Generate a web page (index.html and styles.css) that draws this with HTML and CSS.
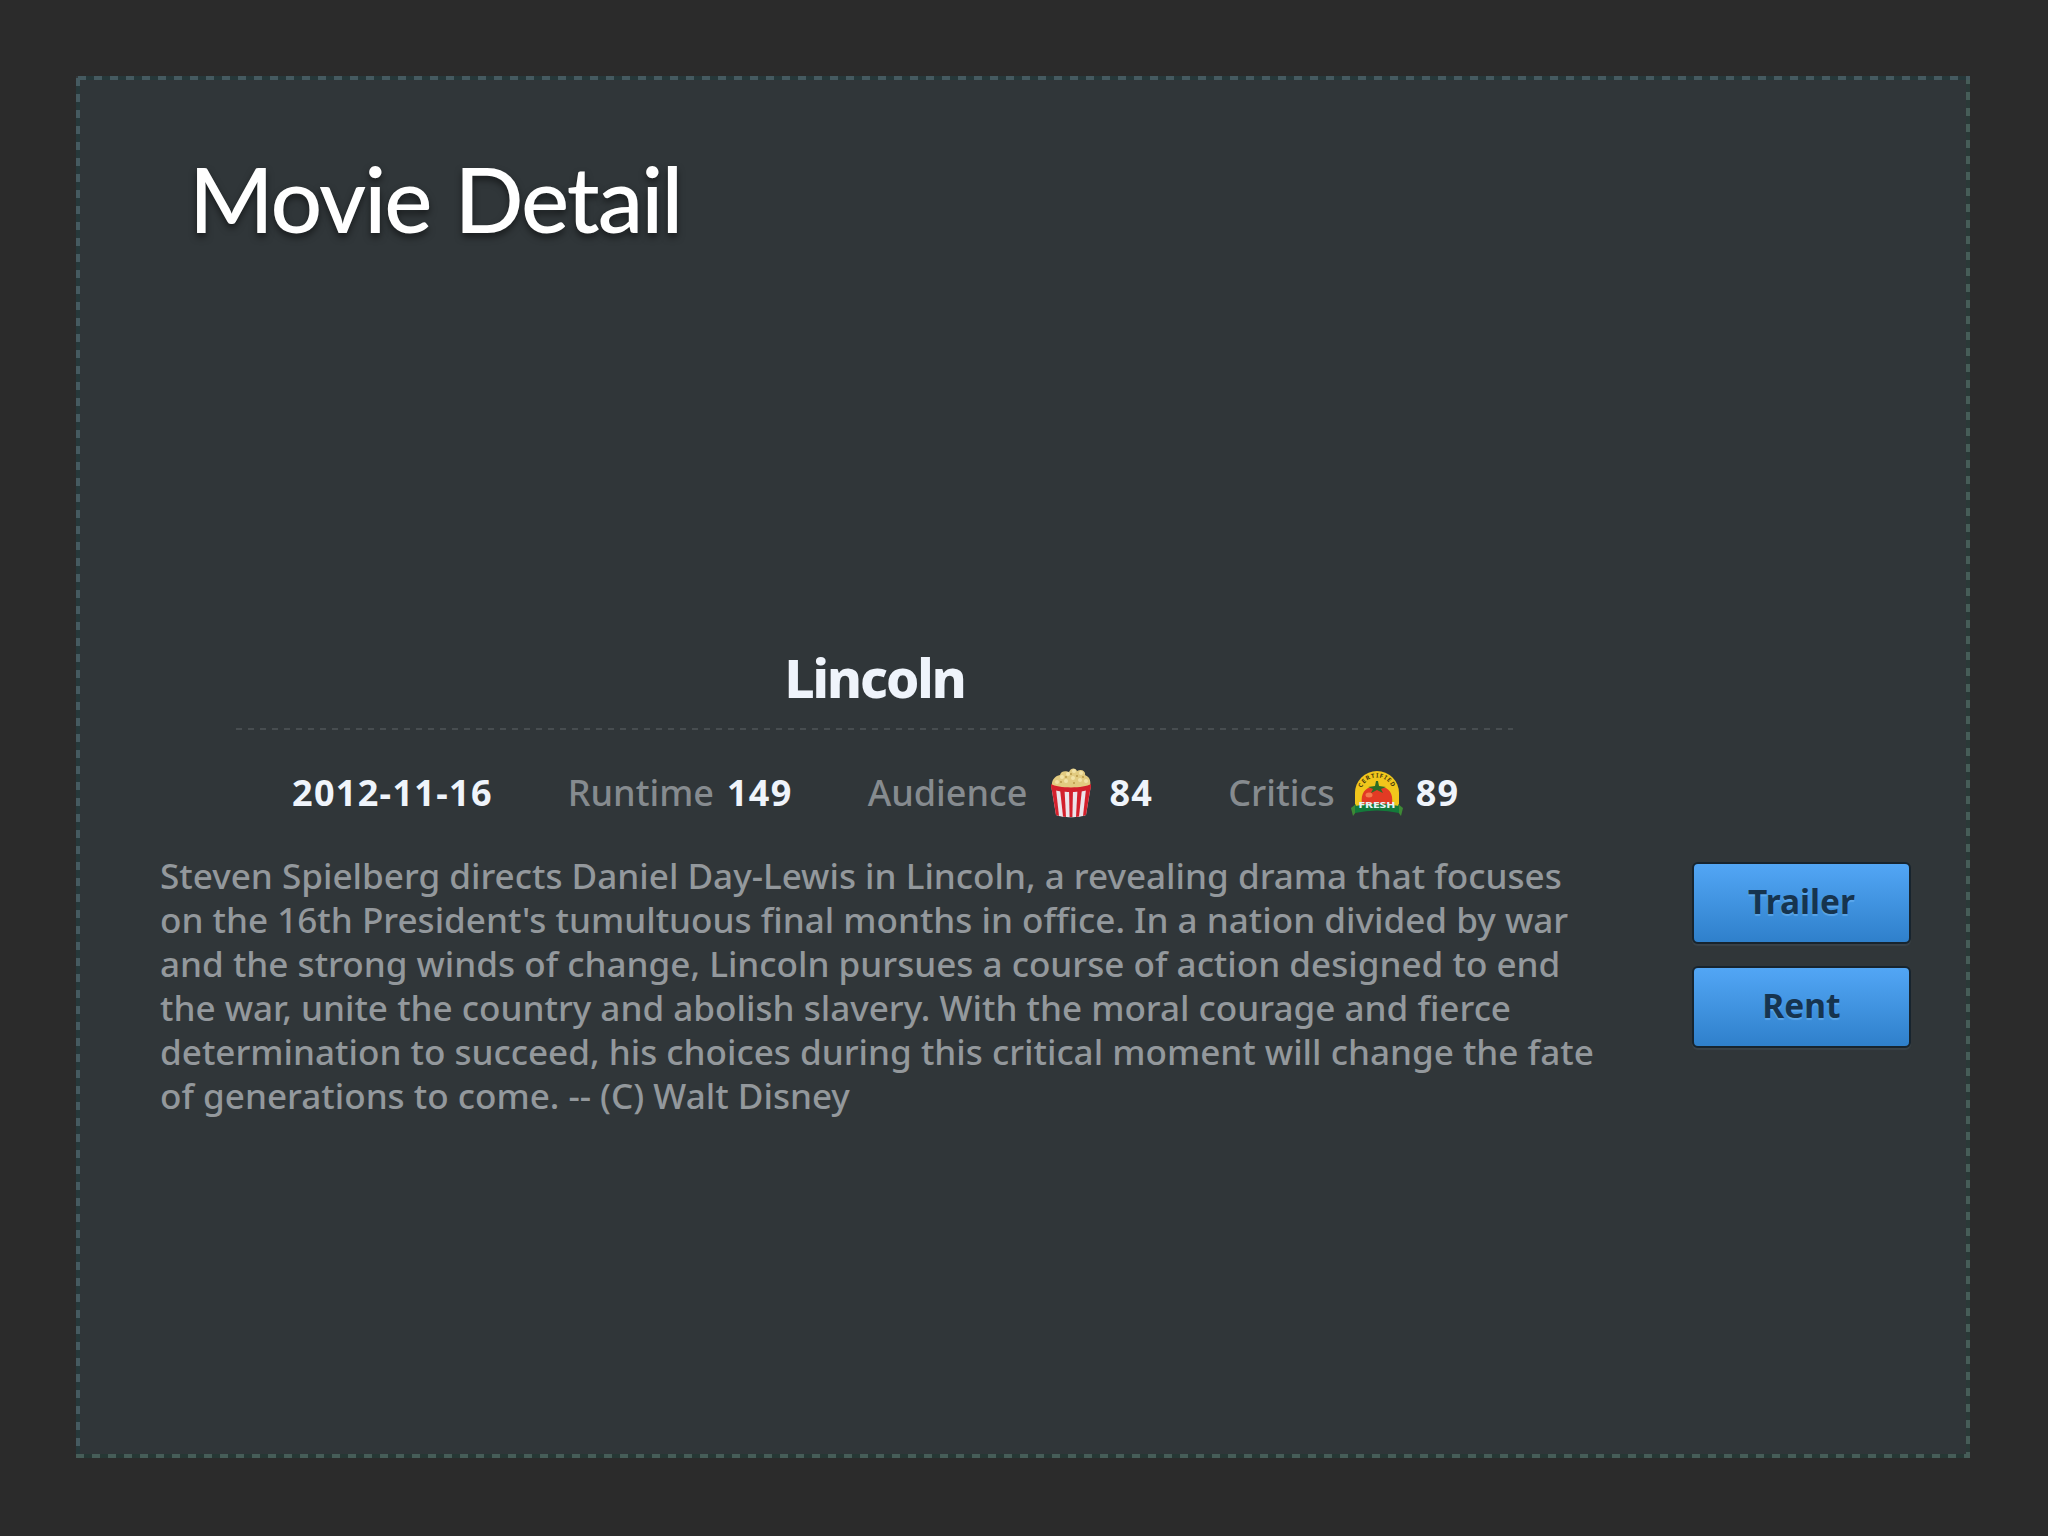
FILE: index.html
```
<!DOCTYPE html>
<html lang="en">
<head>
    <meta charset="UTF-8">
    <meta name="viewport" content="width=device-width, initial-scale=1.0">
    <title>Movie Detail</title>
    <link rel="stylesheet" href="styles.css">
</head>
<body>

    <main class="panel">
        <h1>Movie Detail</h1>

        <section class="movie">
            <!-- Title, ratings and synopsis -->
            <div class="info">
                <h2>Lincoln</h2>

                <div class="meta">
                    <div class="meta-item"><strong>2012-11-16</strong></div>
                    <div class="meta-item"><span>Runtime</span> <strong>149</strong></div>
                    <div class="meta-item">
                        <span>Audience</span>
                        <svg class="popcorn" viewBox="0 0 42 50">
                            <path d="M2 19C1 12 5 8 10 7C11 2 17 3 19 4C21-1 26 0 27 3C32 0 36 4 35 7C40 9 41 13 40 19C30 23 12 23 2 19Z" fill="#e2cb80"/>
                            <g fill="#f1e2a6">
                                <circle cx="7" cy="14" r="2"/>
                                <circle cx="12" cy="9" r="2"/>
                                <circle cx="18" cy="6" r="2"/>
                                <circle cx="24" cy="3" r="2"/>
                                <circle cx="31" cy="5" r="2"/>
                                <circle cx="16" cy="13" r="2"/>
                                <circle cx="23" cy="10" r="2"/>
                                <circle cx="30" cy="12" r="2"/>
                                <circle cx="36" cy="13" r="2"/>
                            </g>
                            <g fill="#b9994a">
                                <circle cx="11" cy="14" r="1"/>
                                <circle cx="16" cy="9" r="1"/>
                                <circle cx="21" cy="6" r="1"/>
                                <circle cx="27" cy="8" r="1"/>
                                <circle cx="33" cy="9" r="1"/>
                                <circle cx="24" cy="15" r="1"/>
                            </g>
                            <path d="M1 17C8 22 34 22 41 17L36 47C30 50 12 50 6 47Z" fill="#ece4ea"/>
                            <g fill="#d3202c">
                                <path d="M1 17L6 47L9 48L6 21Z"/>
                                <path d="M10 21L13 48.6L16 49L14.5 21Z"/>
                                <path d="M19 21L19.6 49H22.4L23 21Z"/>
                                <path d="M27.5 21L26 49L29 48.6L32 21Z"/>
                                <path d="M36 21L33 48L36 47L41 17Z"/>
                            </g>
                            <path d="M1 16C8 20.500 34 20.500 41 16L40.500 21C34 25 8 25 1.500 21Z" fill="#d3202c"/>
                        </svg>
                        <strong>84</strong>
                    </div>
                    <div class="meta-item">
                        <span>Critics</span>
                        <svg class="fresh" viewBox="0 0 52 46">
                            <path d="M4 36V23A22 22 0 0 1 48 23V36Z" fill="#f1c61c"/>
                            <path id="arc" d="M9.500 30V24A16.500 16.500 0 0 1 42.500 24V30" fill="none"/>
                            <text class="arc-text"><textPath href="#arc" startOffset="50%">CERTIFIED</textPath></text>
                            <path d="M11 34C9 21 17 15 26 18C35 15 43 21 41 34Z" fill="#e23a24"/>
                            <ellipse cx="18" cy="25" rx="3.500" ry="2.500" fill="#f47a4c"/>
                            <path d="M25 11L27 11L28 16L35 17L30 19L32 23L26 20L20 23L22 19L17 17L24 16Z" fill="#2d6b25"/>
                            <path d="M0 38L5 34V42L2 46Z" fill="#3d8a35"/>
                            <path d="M52 38L47 34V42L50 46Z" fill="#3d8a35"/>
                            <path d="M4 36Q26 31 48 36V43Q26 38 4 43Z" fill="#137a3a"/>
                            <text class="fresh-text" x="26" y="38" textLength="37" lengthAdjust="spacingAndGlyphs">FRESH</text>
                        </svg>
                        <strong>89</strong>
                    </div>
                </div>

                <p class="synopsis">
                    Steven Spielberg directs Daniel Day-Lewis in Lincoln, a revealing drama that focuses<br>
                    on the 16th President's tumultuous final months in office. In a nation divided by war<br>
                    and the strong winds of change, Lincoln pursues a course of action designed to end<br>
                    the war, unite the country and abolish slavery. With the moral courage and fierce<br>
                    determination to succeed, his choices during this critical moment will change the fate<br>
                    of generations to come. -- (C) Walt Disney
                </p>
            </div>

            <!-- Actions -->
            <div class="actions">
                <button>Trailer</button>
                <button>Rent</button>
            </div>
        </section>
    </main>

</body>
</html>
```

FILE: styles.css
```
* {
    box-sizing: border-box;
    margin: 0;
    padding: 0;
}

body {
    height: 1536px;
    padding: 76px 78px 78px 76px;
    background-color: #2b2b2b;
    font-family: "Noto Sans", "Open Sans", sans-serif;
    overflow: hidden;
}

/* Panel, the dashed edge is drawn with 8px dashes and 8px gaps */
.panel {
    height: 1382px;
    padding: 72px 59px 0 82px;
    background:
        repeating-linear-gradient(90deg, #455a60 0 8px, #26383a 8px 16px) 2px 0 / 100% 4px no-repeat,
        repeating-linear-gradient(90deg, #465d58 0 8px, #263835 8px 16px) 0 100% / 100% 4px no-repeat,
        repeating-linear-gradient(180deg, #455a60 0 8px, #26383a 8px 16px) 0 2px / 4px 100% no-repeat,
        repeating-linear-gradient(180deg, #465d58 0 8px, #2a3937 8px 16px) 100% 0 / 4px 100% no-repeat,
        #303639;
}

h1 {
    padding-left: 31px;
    font-family: Lato, sans-serif;
    font-size: 91px;
    font-weight: 500;
    line-height: 100px;
    letter-spacing: -2px;
    word-spacing: 3px;
    color: #fff;
    text-shadow: 0 4px 7px rgba(0, 0, 0, 0.5);
}

.movie {
    display: flex;
    justify-content: space-between;
    margin-top: 400px;
}

.info {
    width: 1433px;
}

/* Movie name */
h2 {
    height: 82px;
    margin: 0 78px;
    background: repeating-linear-gradient(90deg, #474d50 0 6px, transparent 6px 12px) 0 100% / 100% 2px no-repeat;
    font-size: 53px;
    font-weight: 800;
    line-height: 60px;
    letter-spacing: -2px;
    text-align: center;
    color: #eff4fb;
}

/* Date, runtime and scores */
.meta {
    display: flex;
    gap: 75px;
    height: 50px;
    margin-top: 38px;
    padding-left: 134px;
    align-items: center;
    font-size: 36px;
    line-height: 44px;
}

.meta-item {
    display: flex;
    align-items: center;
    gap: 13px;
}

.meta span {
    font-weight: 500;
    color: #868b8f;
}

.meta strong {
    font-weight: 700;
    letter-spacing: 1.3px;
    color: #eff4fb;
}

.popcorn {
    width: 42px;
    height: 50px;
    margin: 0 4px 0 10px;
}

.fresh {
    width: 52px;
    height: 46px;
    margin-left: 3px;
    overflow: visible;
}

.arc-text {
    font-size: 6px;
    font-weight: 700;
    letter-spacing: 1px;
    text-anchor: middle;
    fill: #4a3b0c;
}

.fresh-text {
    font-size: 9.5px;
    font-weight: 800;
    text-anchor: middle;
    fill: #e4f1f5;
}

.synopsis {
    margin-top: 35px;
    padding-left: 2px;
    font-size: 35.1px;
    font-weight: 500;
    line-height: 44px;
    white-space: nowrap;
    color: #93989c;
}

/* Buttons */
.actions {
    display: flex;
    flex-direction: column;
    gap: 22px;
    margin-top: 214px;
}

button {
    width: 219px;
    height: 82px;
    padding-bottom: 4px;
    border: 2px solid #17242e;
    border-radius: 6px;
    background: linear-gradient(#52a6f5, #2f80cb);
    box-shadow: 0 2px 1px #3a4248;
    font-family: inherit;
    font-size: 33.5px;
    font-weight: 700;
    color: #16344f;
    text-shadow: 0 2px 1px rgba(120, 190, 250, 0.5);
}
```
